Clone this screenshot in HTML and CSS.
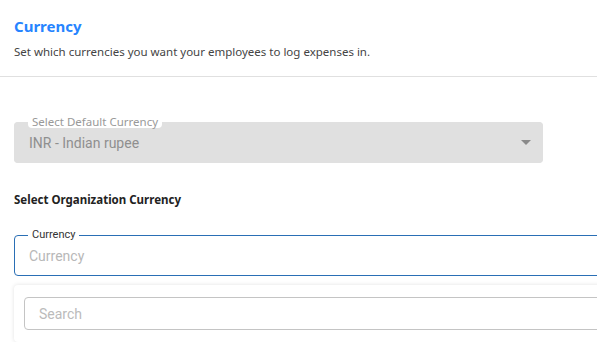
FILE: index.html
```html
<!DOCTYPE html>
<html lang="en">
<head>
    <meta charset="UTF-8">
    <meta name="viewport" content="width=device-width, initial-scale=1.0">
    <title>Currency Settings</title>
    <link rel="stylesheet" href="styles.css">
</head>
<body>
    <div class="header">
        <h1>Currency</h1>
        <p>Set which currencies you want your employees to log expenses in.</p>
    </div>

    <div class="content">
        <fieldset class="field disabled">
            <legend>Select Default Currency</legend>
            <span class="value">INR - Indian rupee</span>
            <span class="arrow"></span>
        </fieldset>

        <h2>Select Organization Currency</h2>

        <fieldset class="field focused">
            <legend>Currency</legend>
            <span class="placeholder">Currency</span>
        </fieldset>

        <div class="menu">
            <div class="search">Search</div>
        </div>
    </div>
</body>
</html>
```

FILE: styles.css
```css
body {
    margin: 0;
    font-family: "Noto Sans", sans-serif;
    background: white;
    overflow: hidden;
}
.header {
    height: 77px;
    box-sizing: border-box;
    padding: 16px 14px 0;
    border-bottom: 1px solid #e0e0e0;
}
h1 {
    margin: 0;
    font-size: 15px;
    line-height: 20px;
    color: #2684ff;
}
.header p {
    margin: 8px 0 0;
    font-size: 11.5px;
    line-height: 16px;
    color: #444;
}
.content {
    padding: 39px 14px 0;
}
.field {
    margin: 0;
    padding: 0 14px;
    height: 47px;
    box-sizing: border-box;
    display: flex;
    align-items: center;
    border-radius: 4px;
    min-width: 0;
}
.field legend {
    padding: 0 4px;
    margin-left: -1px;
    font-size: 11px;
    line-height: 12px;
}
.disabled {
    width: 529px;
    border: 1px solid #e0e0e0;
    background: #e0e0e0;
}
.disabled legend {
    background: white;
    color: #999;
    border-radius: 4px;
    font-size: 11.5px;
}
.value {
    flex: 1;
    font-family: Roboto, sans-serif;
    font-size: 14px;
    color: #8f8f8f;
    margin-top: -5px;
}
.arrow {
    width: 0;
    height: 0;
    border-left: 5px solid transparent;
    border-right: 5px solid transparent;
    border-top: 5px solid #8a8a8a;
    margin-right: -3px;
    margin-top: -5px;
}
h2 {
    margin: 30px 0 0;
    font-size: 11.5px;
    line-height: 14px;
    color: #222;
}
.focused {
    margin-top: 22px;
    width: 620px;
    border: 1px solid #2a6fb5;
    font-family: Roboto, sans-serif;
}
.focused legend {
    color: #333;
    font-family: Roboto, sans-serif;
}
.placeholder {
    font-size: 14px;
    color: #b8b8b8;
    margin-top: -5px;
}
.menu {
    margin-top: 9px;
    width: 620px;
    padding: 12px 10px;
    box-shadow: 0 0 4px rgba(0, 0, 0, 0.12);
    border-radius: 4px;
    background: white;
}
.search {
    height: 33px;
    box-sizing: border-box;
    border: 1px solid #c4c4c4;
    border-radius: 4px;
    padding: 0 14px;
    display: flex;
    align-items: center;
    font-family: Roboto, sans-serif;
    font-size: 14px;
    color: #bbb;
}
```
